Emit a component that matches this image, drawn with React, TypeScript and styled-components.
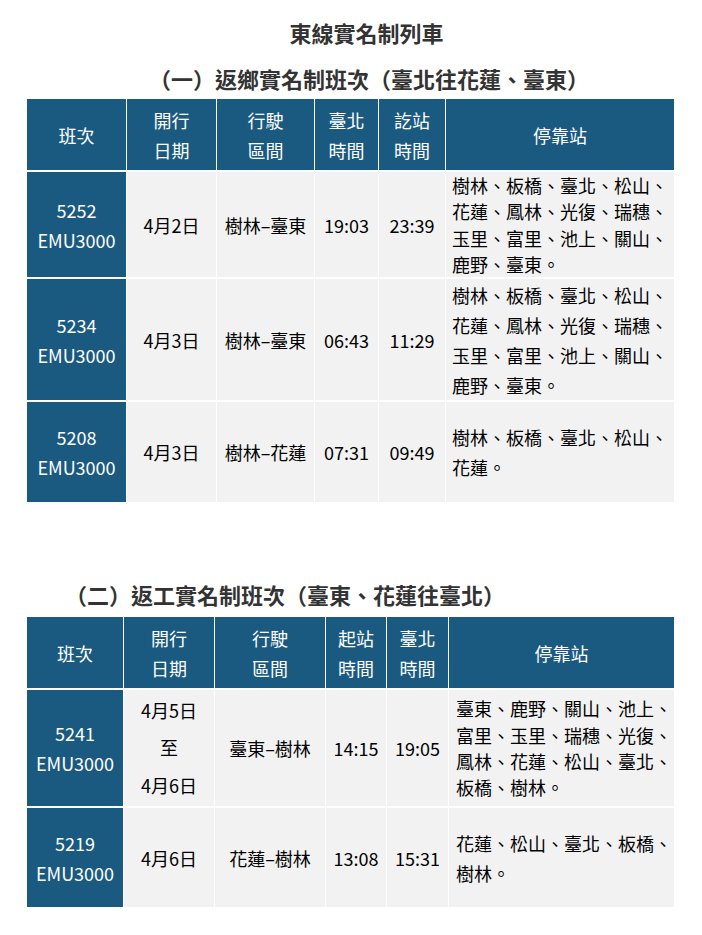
import React from "react";
import styled, { createGlobalStyle } from "styled-components";

const GlobalStyle = createGlobalStyle`
  html, body {
    margin: 0;
    padding: 0;
    background: #ffffff;
  }
  body {
    font-family: "Noto Sans CJK TC", "Noto Sans", sans-serif;
    -webkit-font-smoothing: antialiased;
  }
`;

const BLUE = "#1a5a80";
const GREY = "#f2f2f2";

const Page = styled.div`
  width: 647px;
  padding: 17px 28px 28px 27px;
  display: flex;
  flex-direction: column;
`;

const Title = styled.h1`
  margin: 0;
  padding-left: 32px;
  font-size: 22px;
  line-height: 30px;
  font-weight: 700;
  color: #333333;
  text-align: center;
  letter-spacing: 0;
`;

const SectionTitle = styled.h2<{ $center?: boolean; $top: number }>`
  margin: ${(p) => p.$top}px 0 0 0;
  padding-left: ${(p) => (p.$center ? 37 : 38)}px;
  font-size: 22px;
  line-height: 30px;
  font-weight: 700;
  color: #333333;
  text-align: ${(p) => (p.$center ? "center" : "left")};
`;

const Grid = styled.div<{ $cols: string; $rows: string; $top: number }>`
  margin-top: ${(p) => p.$top}px;
  display: grid;
  grid-template-columns: ${(p) => p.$cols};
  grid-template-rows: ${(p) => p.$rows};
  column-gap: 1px;
  row-gap: 2px;
  width: 647px;
`;

const BaseCell = styled.div`
  display: flex;
  align-items: center;
  justify-content: center;
  text-align: center;
  font-size: 18px;
  line-height: 30px;
  box-sizing: border-box;
`;

const HeadCell = styled(BaseCell)`
  background: ${BLUE};
  color: #ffffff;
`;

const IdCell = styled(BaseCell)`
  background: ${BLUE};
  color: #ffffff;
`;

const Cell = styled(BaseCell)<{ $lh?: number }>`
  background: ${GREY};
  color: #000000;
  line-height: ${(p) => (p.$lh ? `${p.$lh}px` : "30px")};
  white-space: nowrap;
`;

const StopsCell = styled(BaseCell)<{ $lh: number; $pad: number }>`
  background: ${GREY};
  color: #000000;
  justify-content: flex-start;
  text-align: left;
  padding-left: ${(p) => p.$pad}px;
  line-height: ${(p) => p.$lh}px;
`;

const Lines = styled.div`
  display: flex;
  flex-direction: column;
  align-items: center;
`;

type Row = {
  id: string;
  date: string[];
  dateLh?: number;
  route: string;
  t1: string;
  t2: string;
  stops: string;
  stopsLh: number;
};

type TableProps = {
  headers: string[][];
  cols: string;
  rows: string;
  top: number;
  pad: number;
  data: Row[];
};

function Schedule({ headers, cols, rows, top, pad, data }: TableProps) {
  return (
    <Grid $cols={cols} $rows={rows} $top={top}>
      {headers.map((h, i) => (
        <HeadCell key={`h${i}`}>
          <Lines>
            {h.map((line) => (
              <span key={line}>{line}</span>
            ))}
          </Lines>
        </HeadCell>
      ))}
      {data.map((r) => (
        <React.Fragment key={r.id}>
          <IdCell>
            <Lines>
              <span>{r.id}</span>
              <span>EMU3000</span>
            </Lines>
          </IdCell>
          <Cell $lh={r.dateLh}>
            <Lines>
              {r.date.map((d, i) => (
                <span key={i}>{d}</span>
              ))}
            </Lines>
          </Cell>
          <Cell>{r.route}</Cell>
          <Cell>{r.t1}</Cell>
          <Cell>{r.t2}</Cell>
          <StopsCell $lh={r.stopsLh} $pad={pad}>
            <span>{r.stops}</span>
          </StopsCell>
        </React.Fragment>
      ))}
    </Grid>
  );
}

const table1: Row[] = [
  {
    id: "5252",
    date: ["4月2日"],
    route: "樹林–臺東",
    t1: "19:03",
    t2: "23:39",
    stops: "樹林、板橋、臺北、松山、花蓮、鳳林、光復、瑞穗、玉里、富里、池上、關山、鹿野、臺東。",
    stopsLh: 26.5,
  },
  {
    id: "5234",
    date: ["4月3日"],
    route: "樹林–臺東",
    t1: "06:43",
    t2: "11:29",
    stops: "樹林、板橋、臺北、松山、花蓮、鳳林、光復、瑞穗、玉里、富里、池上、關山、鹿野、臺東。",
    stopsLh: 30,
  },
  {
    id: "5208",
    date: ["4月3日"],
    route: "樹林–花蓮",
    t1: "07:31",
    t2: "09:49",
    stops: "樹林、板橋、臺北、松山、花蓮。",
    stopsLh: 30,
  },
];

const table2: Row[] = [
  {
    id: "5241",
    date: ["4月5日", "至", "4月6日"],
    dateLh: 37.5,
    route: "臺東–樹林",
    t1: "14:15",
    t2: "19:05",
    stops: "臺東、鹿野、關山、池上、富里、玉里、瑞穗、光復、鳳林、花蓮、松山、臺北、板橋、樹林。",
    stopsLh: 26.3,
  },
  {
    id: "5219",
    date: ["4月6日"],
    route: "花蓮–樹林",
    t1: "13:08",
    t2: "15:31",
    stops: "花蓮、松山、臺北、板橋、樹林。",
    stopsLh: 30,
  },
];

export default function App() {
  return (
    <>
      <GlobalStyle />
      <Page>
        <Title>東線實名制列車</Title>
        <SectionTitle $center $top={16}>
          （一）返鄉實名制班次（臺北往花蓮、臺東）
        </SectionTitle>
        <Schedule
          top={6}
          pad={6}
          cols="99px 89px 97px 63px 66px 228px"
          rows="71px 105px 121px 100px"
          headers={[
            ["班次"],
            ["開行", "日期"],
            ["行駛", "區間"],
            ["臺北", "時間"],
            ["訖站", "時間"],
            ["停靠站"],
          ]}
          data={table1}
        />
        <SectionTitle $top={77}>
          （二）返工實名制班次（臺東、花蓮往臺北）
        </SectionTitle>
        <Schedule
          top={8}
          pad={7}
          cols="96px 90px 110px 60px 61px 225px"
          rows="71px 116px 99px"
          headers={[
            ["班次"],
            ["開行", "日期"],
            ["行駛", "區間"],
            ["起站", "時間"],
            ["臺北", "時間"],
            ["停靠站"],
          ]}
          data={table2}
        />
      </Page>
    </>
  );
}
